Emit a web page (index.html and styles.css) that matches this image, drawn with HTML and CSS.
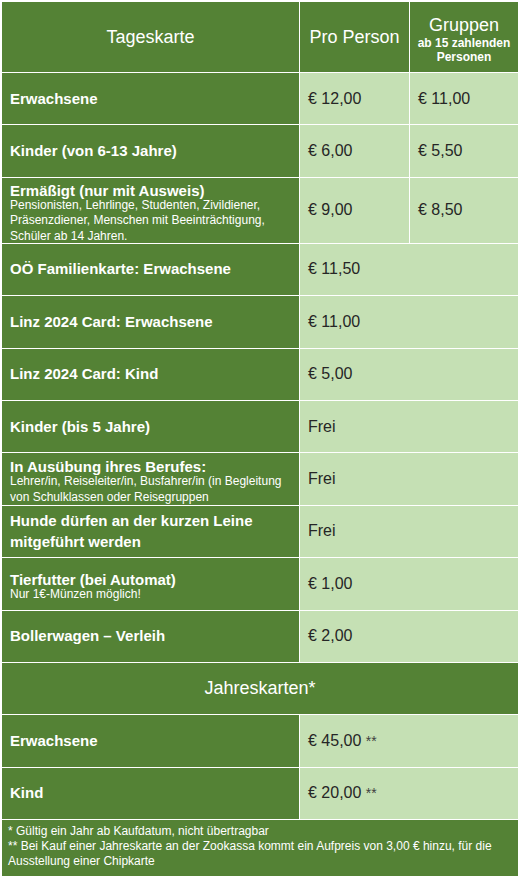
FILE: index.html
```html
<!DOCTYPE html>
<html lang="de">
<head>
<meta charset="utf-8">
<title>Preise</title>
<link rel="stylesheet" href="styles.css">
</head>
<body>
<div class="prices">
  <div class="cell head">Tageskarte</div>
  <div class="cell head">Pro Person</div>
  <div class="cell head group">
    <span class="group-title">Gruppen</span>
    <span class="group-sub">ab 15 zahlenden<br>Personen</span>
  </div>

  <div class="cell label">Erwachsene</div>
  <div class="cell price"><span>€ 12,00</span></div>
  <div class="cell price"><span>€ 11,00</span></div>

  <div class="cell label">Kinder (von 6-13 Jahre)</div>
  <div class="cell price"><span>€ 6,00</span></div>
  <div class="cell price"><span>€ 5,50</span></div>

  <div class="cell label has-sub">
    <span class="title">Ermäßigt (nur mit Ausweis)</span>
    <span class="sub">Pensionisten, Lehrlinge, Studenten, Zivildiener, Präsenzdiener, Menschen mit Beeinträchtigung, Schüler ab 14 Jahren.</span>
  </div>
  <div class="cell price"><span>€ 9,00</span></div>
  <div class="cell price"><span>€ 8,50</span></div>

  <div class="cell label">OÖ Familienkarte: Erwachsene</div>
  <div class="cell price wide"><span>€ 11,50</span></div>

  <div class="cell label">Linz 2024 Card: Erwachsene</div>
  <div class="cell price wide"><span>€ 11,00</span></div>

  <div class="cell label">Linz 2024 Card: Kind</div>
  <div class="cell price wide"><span>€ 5,00</span></div>

  <div class="cell label">Kinder (bis 5 Jahre)</div>
  <div class="cell price wide"><span>Frei</span></div>

  <div class="cell label has-sub">
    <span class="title">In Ausübung ihres Berufes:</span>
    <span class="sub">Lehrer/in, Reiseleiter/in, Busfahrer/in (in Begleitung von Schulklassen oder Reisegruppen</span>
  </div>
  <div class="cell price wide"><span>Frei</span></div>

  <div class="cell label two-line">Hunde dürfen an der kurzen Leine mitgeführt werden</div>
  <div class="cell price wide"><span>Frei</span></div>

  <div class="cell label has-sub">
    <span class="title">Tierfutter (bei Automat)</span>
    <span class="sub">Nur 1€-Münzen möglich!</span>
  </div>
  <div class="cell price wide"><span>€ 1,00</span></div>

  <div class="cell label">Bollerwagen – Verleih</div>
  <div class="cell price wide"><span>€ 2,00</span></div>

  <div class="cell section">Jahreskarten*</div>

  <div class="cell label">Erwachsene</div>
  <div class="cell price wide"><span>€ 45,00 <span class="star">**</span></span></div>

  <div class="cell label">Kind</div>
  <div class="cell price wide"><span>€ 20,00 <span class="star">**</span></span></div>

  <div class="cell notes">
    <p>* Gültig ein Jahr ab Kaufdatum, nicht übertragbar</p>
    <p>** Bei Kauf einer Jahreskarte an der Zookassa kommt ein Aufpreis von 3,00 € hinzu, für die Ausstellung einer Chipkarte</p>
  </div>
</div>
</body>
</html>
```
FILE: styles.css
```css
html, body {
  margin: 0;
  padding: 0;
  background: #ffffff;
}

body {
  font-family: "Liberation Sans", Arial, sans-serif;
}

.prices {
  margin: 2px;
  width: 516px;
  display: grid;
  grid-template-columns: 297px 109px 108px;
  grid-template-rows: 70px repeat(2, 51.4px) 65px repeat(11, 51.4px) 56px;
  gap: 1px;
  background: #ffffff;
}

.cell {
  display: flex;
  flex-direction: column;
  justify-content: center;
  box-sizing: border-box;
  min-width: 0;
}

.head {
  background: #548235;
  color: #ffffff;
  font-size: 18px;
  align-items: center;
  text-align: center;
}

.group {
  padding-top: 6px;
}

.group-title {
  font-size: 18px;
  line-height: 19px;
}

.group-sub {
  font-size: 12px;
  font-weight: bold;
  line-height: 14px;
  margin-top: 1px;
}

.label {
  background: #548235;
  color: #ffffff;
  font-size: 15px;
  font-weight: bold;
  padding: 0 8px;
  line-height: 18px;
}

.label.two-line {
  line-height: 21px;
}

.label.has-sub {
  padding-top: 6px;
}

.label .title {
  line-height: 15px;
}

.label .sub {
  font-size: 12px;
  font-weight: normal;
  line-height: 15.5px;
}

.price {
  background: #c5e0b4;
  color: #262626;
  font-size: 16px;
  padding: 0 8px;
  white-space: nowrap;
}

.price.wide {
  grid-column: span 2;
}

.star {
  font-size: 14px;
  color: #404040;
}

.section {
  grid-column: span 3;
  background: #548235;
  color: #ffffff;
  font-size: 18px;
  align-items: center;
}

.notes {
  grid-column: span 3;
  background: #548235;
  color: #ffffff;
  font-size: 12px;
  line-height: 15px;
  padding: 4px 6px 0;
  justify-content: flex-start;
}

.notes p {
  margin: 0;
}
```
